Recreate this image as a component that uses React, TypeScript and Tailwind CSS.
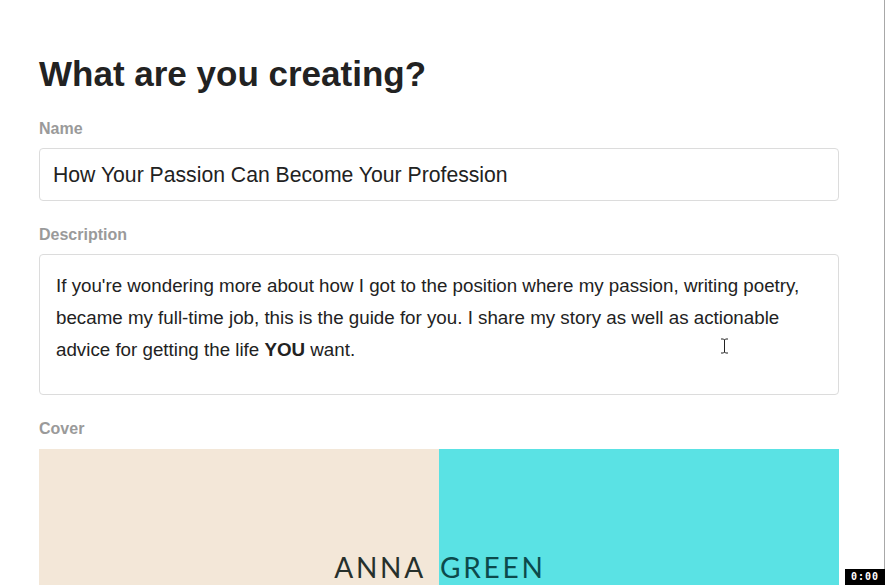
import React from "react";

export default function App() {
  return (
    <div className="relative w-[885px] h-[585px] overflow-hidden bg-white font-['Liberation_Sans',Arial,sans-serif]">
      <div className="absolute right-0 top-0 h-full w-px bg-[#a8a8a8]" />
      <div className="flex flex-col pl-[39px] pt-[54px] w-[839px]">
        <h1 className="text-[35px] leading-[40px] font-bold text-[#222]">What are you creating?</h1>

        <label className="mt-[25px] text-[16px] leading-[20px] font-bold text-[#9a9a9a]">Name</label>
        <div className="mt-[9px] h-[53px] w-[800px] rounded-[4px] border border-[#dcdcdc] flex items-center pl-[13px] text-[21.2px] text-[#222]">
          How Your Passion Can Become Your Profession
        </div>

        <label className="mt-[24px] text-[16px] leading-[20px] font-bold text-[#9a9a9a]">Description</label>
        <div className="relative mt-[9px] h-[141px] w-[800px] rounded-[4px] border border-[#dcdcdc] pl-[16px] pt-[14.5px] text-[18.75px] leading-[32px] text-[#222]">
          <div className="whitespace-nowrap">If you're wondering more about how I got to the position where my passion, writing poetry,</div>
          <div className="whitespace-nowrap">became my full-time job, this is the guide for you. I share my story as well as actionable</div>
          <div className="whitespace-nowrap">advice for getting the life <b>YOU</b> want.</div>
          <svg className="absolute left-[680px] top-[83px]" width="9" height="16" viewBox="0 0 9 16">
            <path d="M1 1h2.5l1 1 1-1H8M4.5 2v12M1 15h2.5l1-1 1 1H8" fill="none" stroke="#222" strokeWidth="1" />
          </svg>
        </div>

        <label className="mt-[24px] text-[16px] leading-[20px] font-bold text-[#9a9a9a]">Cover</label>
        <div className="mt-[10px] w-[800px] h-[200px] flex">
          <div className="w-[400px] h-full bg-[#f3e7d8] flex justify-end items-start pt-[102px] pr-[13px]">
            <span className="font-['Lato',sans-serif] text-[28px] leading-[32px] tracking-[2.8px] text-[#26302c]">ANNA</span>
          </div>
          <div className="w-[400px] h-full bg-[#5ae2e4] flex items-start pt-[102px] pl-[1px]">
            <span className="font-['Lato',sans-serif] text-[28px] leading-[32px] tracking-[2.8px] text-[#0c4a4c]">GREEN</span>
          </div>
        </div>
      </div>
      <div className="absolute right-0 bottom-0 w-[40px] h-[16px] bg-black flex items-center justify-center font-['DejaVu_Sans_Mono',monospace] font-bold text-[10px] leading-none text-white tracking-[1px]">
        0:00
      </div>
    </div>
  );
}
